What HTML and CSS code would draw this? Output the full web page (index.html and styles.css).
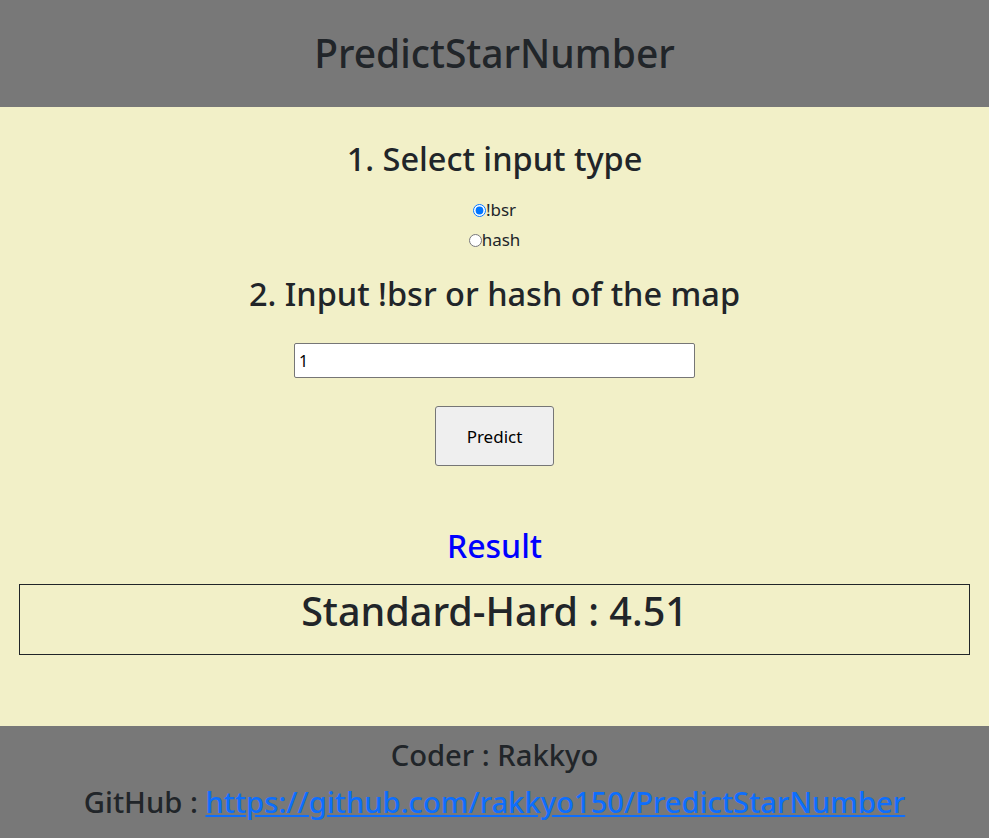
FILE: index.html
```html
<!DOCTYPE html>
<html lang="en">
<head>
<meta charset="utf-8">
<title>PredictStarNumber</title>
<link rel="stylesheet" href="styles.css">
</head>
<body>
<header class="site-header">
  <h1 class="site-title">PredictStarNumber</h1>
</header>
<main class="content">
  <h2 class="step-title">1. Select input type</h2>
  <div class="radio-group">
    <label class="radio-row"><input type="radio" name="type" checked>!bsr</label>
    <label class="radio-row radio-row-2"><input type="radio" name="type">hash</label>
  </div>
  <h2 class="step-title step-2">2. Input !bsr or hash of the map</h2>
  <div class="input-row"><input class="text-input" type="text" value="1"></div>
  <div class="button-row"><button class="predict-btn">Predict</button></div>
  <h2 class="result-title">Result</h2>
  <div class="result-box">
    <h1 class="result-text">Standard-Hard : 4.51</h1>
  </div>
</main>
<footer class="site-footer">
  <p class="footer-line">Coder : Rakkyo</p>
  <p class="footer-line">GitHub : <a class="footer-link" href="#">https://github.com/rakkyo150/PredictStarNumber</a></p>
</footer>
</body>
</html>
```
FILE: styles.css
```css
html, body {
  margin: 0;
  padding: 0;
}
body {
  font-family: "Noto Sans", "Open Sans", sans-serif;
  color: #212529;
  background: #f2f0c8;
}
.site-header {
  background: #787878;
  height: 107px;
  display: flex;
  align-items: center;
  justify-content: center;
}
.site-title {
  margin: 0;
  font-size: 39px;
  font-weight: 500;
  line-height: 1.2;
}
.content {
  padding: 30px 19px 71px;
  text-align: center;
}
.step-title {
  margin: 0;
  font-size: 32.5px;
  font-weight: 500;
  line-height: 44px;
}
.radio-group {
  display: flex;
  flex-direction: column;
  align-items: center;
  margin-top: 14px;
}
.radio-row {
  font-size: 17px;
  line-height: 30px;
  height: 30px;
  display: flex;
  align-items: center;
}
.radio-row input {
  margin: 0;
  width: 13px;
  height: 13px;
}
.step-2 {
  margin-top: 17px;
}
.input-row {
  margin-top: 27px;
  display: flex;
  justify-content: center;
}
.text-input {
  width: 401px;
  height: 35px;
  box-sizing: border-box;
  border: 1px solid #767676;
  border-radius: 2px;
  padding: 0 4px;
  font-family: inherit;
  font-size: 16px;
  color: #000;
  background: #fff;
}
.button-row {
  margin-top: 28px;
  display: flex;
  justify-content: center;
}
.predict-btn {
  width: 119px;
  height: 60px;
  background: #efefef;
  border: 1px solid #767676;
  border-radius: 3px;
  font-family: inherit;
  font-size: 17px;
  color: #000;
}
.result-title {
  margin: 58px 0 0;
  color: #0000ff;
  font-size: 32px;
  font-weight: 500;
  line-height: 44px;
}
.result-box {
  margin-top: 16px;
  border: 1px solid #212529;
  height: 71px;
  box-sizing: border-box;
}
.result-text {
  margin: 0;
  font-size: 39.5px;
  font-weight: 500;
  line-height: 52px;
}
.site-footer {
  background: #787878;
  padding: 6px 0 20px;
  text-align: center;
}
.footer-line {
  margin: 0;
  font-size: 29.2px;
  font-weight: 500;
  line-height: 47px;
}
.footer-link {
  color: #0d6efd;
}
```
